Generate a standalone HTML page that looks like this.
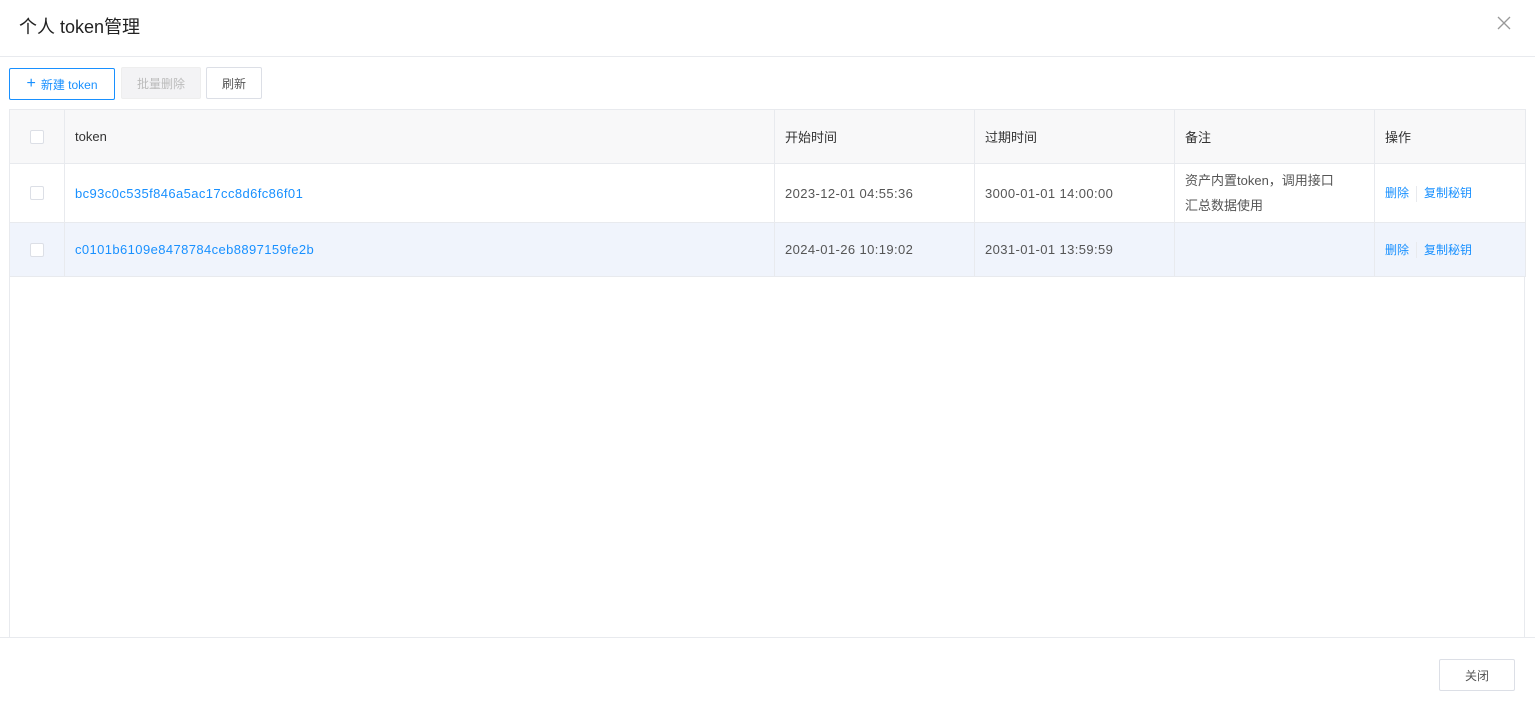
<!DOCTYPE html><html><head><meta charset="utf-8"><style>
*{box-sizing:border-box;margin:0;padding:0}
body{width:1535px;height:704px;background:#fff;font-family:"Liberation Sans","Noto Sans CJK SC",sans-serif;color:#333;position:relative;overflow:hidden;font-size:13px}
.a{position:absolute}
.title{left:19px;top:13px;font-size:18px;color:#222}
.btn{position:absolute;height:32px;border:1px solid #dcdfe6;border-radius:2px;font-size:12px;display:flex;align-items:center;justify-content:center;background:#fff;color:#555}
table{position:absolute;left:9px;top:109px;width:1516px;border-collapse:collapse;table-layout:fixed}
td{border:1px solid #e8eaee;padding:0 10px;font-size:13px;color:#555;letter-spacing:0.4px}
.h td{background:#f8f8f9;height:54px;color:#333;letter-spacing:0}
.cb{width:14px;height:14px;border:1px solid #dcdfe6;border-radius:2px;background:#fff;margin:0 auto}
a{color:#1890ff;text-decoration:none}
.op{font-size:12px;color:#1890ff;letter-spacing:0}
.op i{display:inline-block;width:1px;height:16px;background:#e8eaee;margin:0 7px;vertical-align:middle}
</style></head><body>
<div class="a title">个人 token管理</div>
<svg class="a" style="left:1497px;top:16px" width="14" height="14"><path d="M1 1L13 13M13 1L1 13" stroke="#999" stroke-width="1.3"/></svg>
<div class="a" style="left:0;top:56px;width:1535px;height:1px;background:#e8eaee"></div>
<div class="btn" style="left:9px;top:68px;width:106px;border-color:#1890ff;color:#1890ff"><span style="font-size:16px;margin-right:5px;font-weight:300">+</span>新建 token</div>
<div class="btn" style="left:121px;top:67px;width:80px;background:#f3f3f5;border-color:#eee;color:#bbb">批量删除</div>
<div class="btn" style="left:206px;top:67px;width:56px">刷新</div>
<table>
<colgroup><col style="width:55px"><col style="width:710px"><col style="width:200px"><col style="width:200px"><col style="width:200px"><col style="width:151px"></colgroup>
<tr class="h"><td><div class="cb"></div></td><td>token</td><td>开始时间</td><td>过期时间</td><td>备注</td><td>操作</td></tr>
<tr style="height:59px"><td><div class="cb"></div></td><td><a>bc93c0c535f846a5ac17cc8d6fc86f01</a></td><td>2023-12-01 04:55:36</td><td>3000-01-01 14:00:00</td><td style="line-height:25px;letter-spacing:0">资产内置token，调用接口<br>汇总数据使用</td><td class="op">删除<i></i>复制秘钥</td></tr>
<tr style="height:54px;background:#f0f4fc"><td><div class="cb"></div></td><td><a>c0101b6109e8478784ceb8897159fe2b</a></td><td>2024-01-26 10:19:02</td><td>2031-01-01 13:59:59</td><td></td><td class="op">删除<i></i>复制秘钥</td></tr>
</table>
<div class="a" style="left:9px;top:276px;width:1px;height:361px;background:#e8eaee"></div>
<div class="a" style="left:1524px;top:276px;width:1px;height:361px;background:#e8eaee"></div>
<div class="a" style="left:0;top:637px;width:1535px;height:1px;background:#e8eaee"></div>
<div class="btn" style="left:1439px;top:659px;width:76px">关闭</div>
</body></html>
